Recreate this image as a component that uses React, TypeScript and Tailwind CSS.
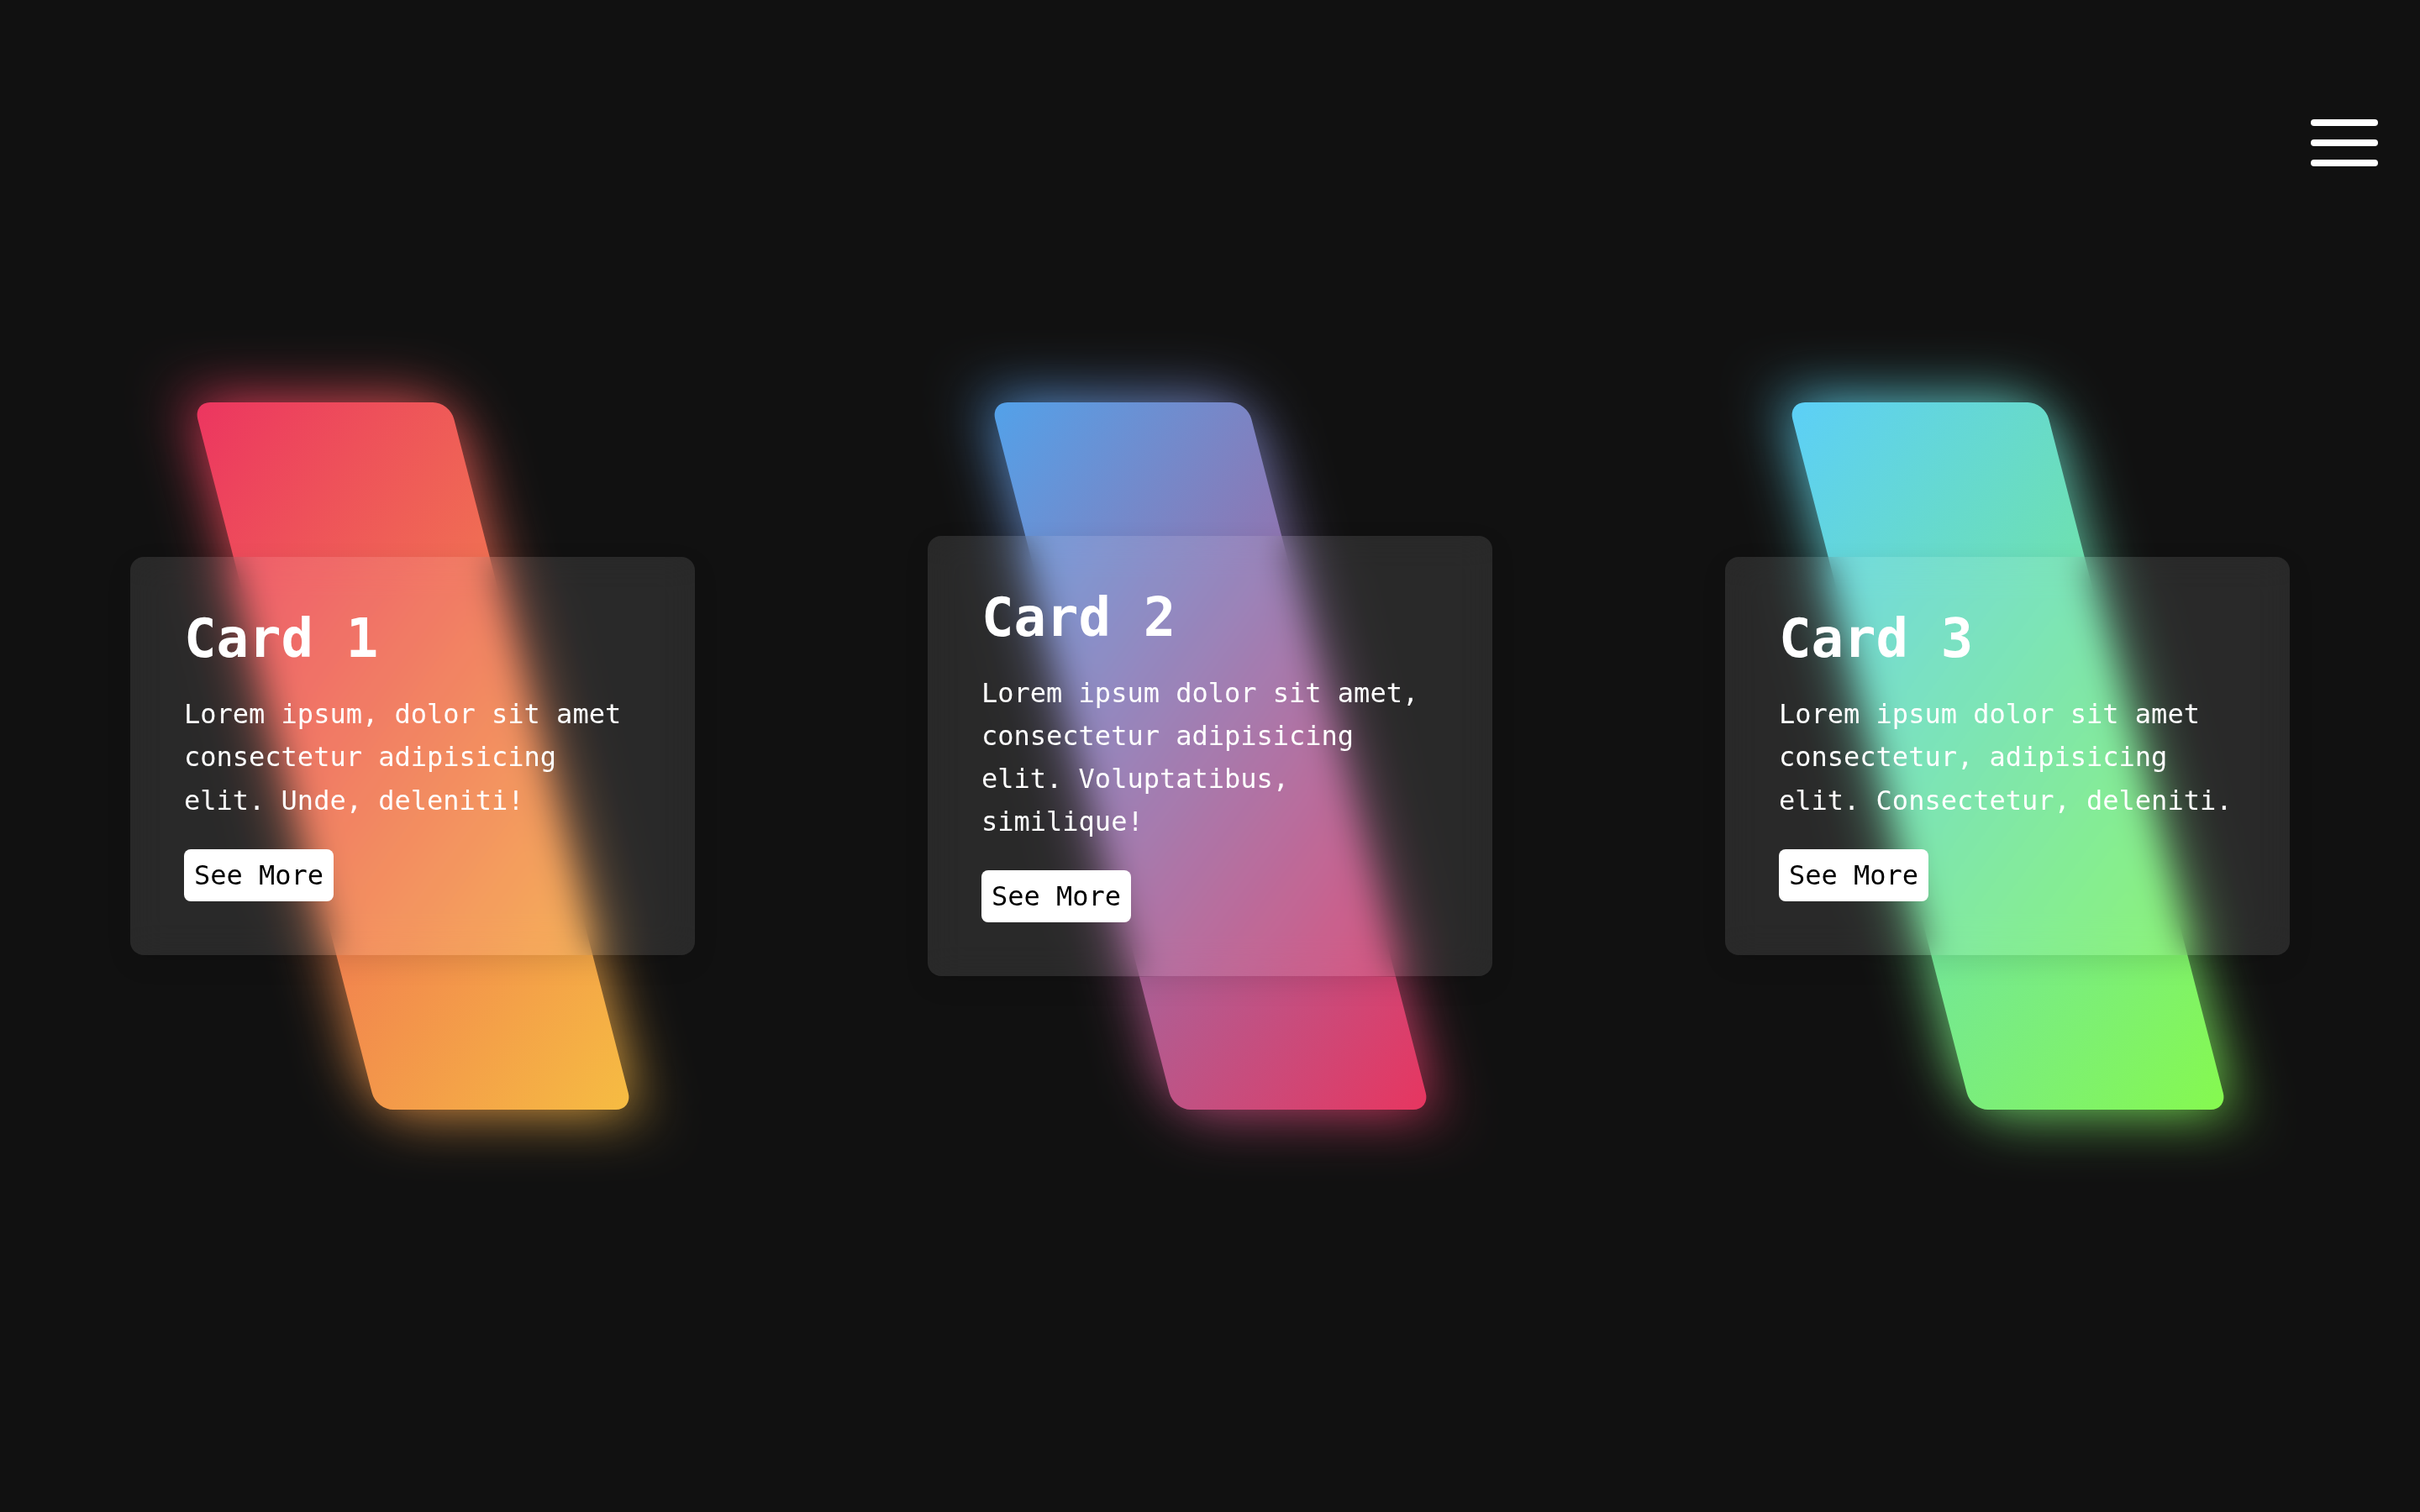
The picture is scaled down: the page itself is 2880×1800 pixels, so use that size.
import React from 'react';

type Card = {
  id: number;
  title: string;
  text: string;
  gradient: string;
};

const cards: Card[] = [
  {
    id: 1,
    title: 'Card 1',
    text: 'Lorem ipsum, dolor sit amet consectetur adipisicing elit. Unde, deleniti!',
    gradient: 'bg-[linear-gradient(135deg,#ec3560,#f6bd42)]',
  },
  {
    id: 2,
    title: 'Card 2',
    text: 'Lorem ipsum dolor sit amet, consectetur adipisicing elit. Voluptatibus, similique!',
    gradient: 'bg-[linear-gradient(135deg,#52a2ea,#e8355f)]',
  },
  {
    id: 3,
    title: 'Card 3',
    text: 'Lorem ipsum dolor sit amet consectetur, adipisicing elit. Consectetur, deleniti.',
    gradient: 'bg-[linear-gradient(135deg,#5ccff8,#86f94e)]',
  },
];

const MenuButton = () => (
  <button className="absolute top-[142px] right-[50px] flex flex-col gap-[16px]" aria-label="Menu">
    <span className="block w-[80px] h-[8px] rounded-full bg-white"></span>
    <span className="block w-[80px] h-[8px] rounded-full bg-white"></span>
    <span className="block w-[80px] h-[8px] rounded-full bg-white"></span>
  </button>
);

const GlassCard = ({ card }: { card: Card }) => (
  <div className="grid place-items-center w-[672px] h-[842px]">
    {/* glow */}
    <div
      className={`col-start-1 row-start-1 w-[305px] h-[842px] rounded-[20px] skew-x-[14.5deg] blur-[36px] ${card.gradient}`}
    ></div>
    {/* skewed shape */}
    <div
      className={`col-start-1 row-start-1 w-[305px] h-[842px] rounded-[20px] skew-x-[14.5deg] ${card.gradient}`}
    ></div>
    {/* glass content */}
    <div className="col-start-1 row-start-1 w-full rounded-[16px] bg-white/10 backdrop-blur-[20px] px-[64px] pt-[60px] pb-[64px] text-white shadow-[0_10px_30px_rgba(0,0,0,0.1)]">
      <h2 className="text-[64px] font-bold leading-[normal] mb-[28px]">{card.title}</h2>
      <p className="text-[32px] leading-[1.6] mb-[32px]">{card.text}</p>
      <a className="inline-block bg-white text-black text-[32px] leading-[normal] p-[12px] rounded-[8px]">
        See More
      </a>
    </div>
  </div>
);

export default function App() {
  return (
    <div className="relative min-h-screen h-[1800px] bg-[#111111] font-['DejaVu_Sans_Mono',monospace] overflow-hidden">
      <MenuButton />
      <div className="h-full flex items-center justify-center gap-[277px]">
        {cards.map((card) => (
          <GlassCard key={card.id} card={card} />
        ))}
      </div>
    </div>
  );
}
